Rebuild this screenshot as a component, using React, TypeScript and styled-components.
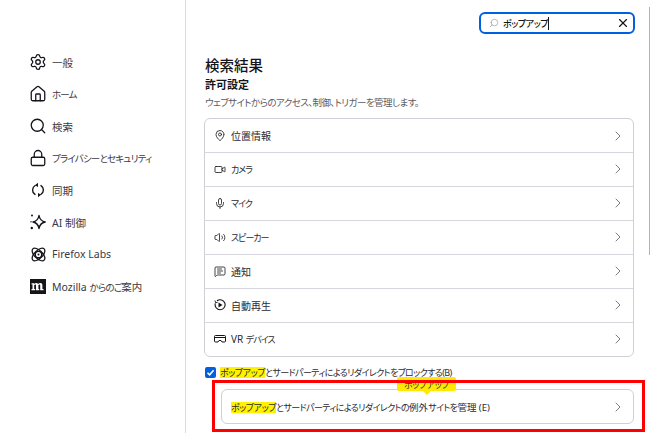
import React from 'react';
import styled, { createGlobalStyle } from 'styled-components';
import {
  Settings,
  House,
  Search,
  Lock,
  MapPin,
  Video,
  Mic,
  Volume2,
  MessageSquareText,
  ChevronRight,
  X,
} from 'lucide-react';

const GlobalStyle = createGlobalStyle`
  html, body {
    margin: 0;
    padding: 0;
    background: #fff;
    overflow: hidden;
  }
  body {
    font-family: "Noto Sans", "Noto Sans CJK JP", sans-serif;
    font-feature-settings: "palt";
    color: #2b2a33;
  }
`;

const Page = styled.div`
  position: relative;
  display: flex;
  width: 650px;
  height: 433px;
  overflow: hidden;
`;

const Sidebar = styled.nav`
  width: 186px;
  height: 100%;
  box-sizing: border-box;
  padding: 46px 0 0 29px;
  border-right: 1px solid #dcdce0;
  display: flex;
  flex-direction: column;
  flex-shrink: 0;
`;

// the kana in the reference's UI font are much narrower than Noto's
const Kana = styled.span`
  font-size: 9px;
  letter-spacing: -0.6px;
`;

const NavItem = styled.div`
  height: 32px;
  display: flex;
  align-items: center;
  gap: 5px;
  font-size: 10.5px;
  color: #3a3944;
  white-space: pre;
  ${Kana} {
    font-size: 9.5px;
    letter-spacing: -0.8px;
  }
`;

const NavIcon = styled.span`
  width: 18px;
  height: 18px;
  display: flex;
  align-items: center;
  justify-content: center;
  color: #15141a;
  flex-shrink: 0;
`;

const Main = styled.main`
  width: 430px;
  margin-left: 18px;
  display: flex;
  flex-direction: column;
`;

const SearchRow = styled.div`
  display: flex;
  justify-content: flex-end;
  margin-right: -1px;
  padding-top: 12px;
`;

const SearchBox = styled.div`
  width: 156px;
  height: 22px;
  box-sizing: border-box;
  border: 2px solid #0060df;
  border-radius: 6px;
  display: flex;
  align-items: center;
  padding: 0 3px 0 8px;
  font-size: 9px;
  font-weight: 500;
  letter-spacing: -0.45px;
  color: #15141a;
`;

const SearchGlass = styled.span`
  display: flex;
  color: #8f8f9d;
  margin-right: 4px;
  transform: scaleX(-1);
`;

const Caret = styled.span`
  width: 1px;
  height: 13px;
  background: #15141a;
`;

const Spacer = styled.span`
  flex: 1;
`;

const Heading = styled.h1`
  margin: 20px 0 0 1px;
  font-size: 14.5px;
  line-height: 22px;
  font-weight: 500;
  color: #15141a;
`;

const SubHeading = styled.h2`
  margin: 0 0 0 1px;
  font-size: 11px;
  line-height: 17px;
  font-weight: 700;
  color: #15141a;
`;

const Description = styled.p`
  margin: 1px 0 0 1px;
  font-size: 9.5px;
  letter-spacing: -0.55px;
  line-height: 17px;
  color: #5b5b66;
`;

const Card = styled.div`
  margin-top: 7px;
  border: 1px solid #cfcfd8;
  border-radius: 6px;
  display: flex;
  flex-direction: column;
`;

const Row = styled.div`
  height: 33px;
  box-sizing: border-box;
  display: flex;
  align-items: center;
  padding: 0 7px 0 9px;
  font-size: 10px;
  color: #2b2a33;
  white-space: pre;
  & + & {
    height: 34px;
    padding-bottom: 1px;
    border-top: 1px solid #d7d7dd;
  }
  ${Kana} {
    letter-spacing: -1px;
  }
`;

const RowIcon = styled.span`
  width: 12px;
  height: 12px;
  margin-right: 5px;
  display: flex;
  align-items: center;
  justify-content: center;
  color: #15141a;
`;

const Chevron = styled.span`
  margin-left: auto;
  display: flex;
  color: #5b5b66;
`;

const CheckRow = styled.label`
  margin-top: 8px;
  padding-left: 1px;
  height: 14px;
  display: flex;
  align-items: center;
  font-size: 10px;
  color: #2b2a33;
  white-space: pre;
`;

const CheckBox = styled.span`
  width: 11px;
  height: 11px;
  margin-right: 4px;
  border-radius: 2px;
  background: #0060df;
  display: flex;
  align-items: center;
  justify-content: center;
`;

const Highlight = styled.mark`
  display: inline-block;
  background: #fff200;
  color: inherit;
  font-size: 9px;
  letter-spacing: -0.45px;
  line-height: 11px;
`;

const ManageButton = styled.div`
  position: relative;
  margin: 10px 0 0 17px;
  height: 35px;
  box-sizing: border-box;
  border: 1px solid #cfcfd8;
  border-radius: 6px;
  display: flex;
  align-items: center;
  padding: 0 7px 0 9px;
  font-size: 9.5px;
  color: #2b2a33;
  white-space: pre;
`;

const Tooltip = styled.span`
  position: absolute;
  left: 175px;
  top: -13px;
  height: 14px;
  padding: 0 7px;
  border-radius: 2px;
  background: #ffe900;
  font-size: 9px;
  letter-spacing: -0.45px;
  line-height: 15px;
  color: #3a3944;
`;

const TooltipTip = styled.span`
  position: absolute;
  left: 201px;
  top: 1px;
  width: 0;
  height: 0;
  border-left: 4px solid transparent;
  border-right: 4px solid transparent;
  border-top: 4px solid #ffe900;
`;

const RedFrame = styled.div`
  position: absolute;
  left: 212px;
  top: 380px;
  width: 433px;
  height: 52px;
  box-sizing: border-box;
  border: 3px solid #ff0000;
  pointer-events: none;
`;

const ScrollThumb = styled.div`
  position: absolute;
  right: 0;
  top: 7px;
  width: 1px;
  height: 248px;
  background: #b4b4b8;
`;

const SparkIcon = () => (
  <svg width="16" height="16" viewBox="0 0 16 16" fill="none" stroke="currentColor" strokeWidth="1.4" strokeLinejoin="round">
    <path d="M9 1.500c.7 4 2.300 5.800 6.200 6.500-3.900.7-5.500 2.500-6.200 6.500C8.300 10.500 6.700 8.700 3 8c3.700-.7 5.300-2.500 6-6.500z" />
    <circle cx="2" cy="1.500" r="1" fill="currentColor" stroke="none" />
    <circle cx="1.800" cy="14" r="1.200" fill="currentColor" stroke="none" />
    <circle cx="1" cy="7.700" r=".7" fill="currentColor" stroke="none" />
  </svg>
);

const SyncIcon = () => (
  <svg width="16" height="16" viewBox="0 0 16 16" fill="none" stroke="currentColor" strokeWidth="1.4" strokeLinecap="round">
    <path d="M5.200 3.500A5.200 5.200 0 0 0 5 12.400" />
    <path d="M10.800 12.500A5.200 5.200 0 0 0 11 3.600" />
    <path d="M8 .8 5 3.300l3 1.700z" fill="currentColor" stroke="none" />
    <path d="M8 15.200l3-2.500-3-1.700z" fill="currentColor" stroke="none" />
  </svg>
);

const LabsIcon = () => (
  <svg width="17" height="17" viewBox="0 0 17 17" fill="none" stroke="currentColor" strokeWidth="1.3">
    <ellipse cx="8.500" cy="8.500" rx="8" ry="4" transform="rotate(45 8.500 8.500)" />
    <ellipse cx="8.500" cy="8.500" rx="8" ry="4" transform="rotate(-45 8.500 8.500)" />
    <circle cx="8.500" cy="8.500" r="3.200" />
    <circle cx="8.500" cy="8.500" r="1" fill="currentColor" stroke="none" />
  </svg>
);

const MozillaIcon = () => (
  <svg width="16" height="15" viewBox="0 0 16 15">
    <rect width="16" height="15" fill="#15141a" />
    <path d="M1.500 4.200h2.700v.9c.5-.7 1.200-1 2-1 .9 0 1.500.3 1.900 1 .5-.7 1.300-1 2.200-1 1.300 0 2.100.8 2.100 2.100v3.700h1.100v1.300h-3.300V6.700c0-.8-.3-1.100-.7-1.100-.5 0-.9.200-1.100.7v3.600h.8v1.300H6V6.700c0-.8-.2-1.100-.7-1.100-.5 0-.9.200-1.100.7v3.600h1v1.300H1.500V9.900h1V5.500h-1z" fill="#fff" />
  </svg>
);

const AutoplayIcon = () => (
  <svg width="12" height="12" viewBox="0 0 12 12" fill="none" stroke="currentColor" strokeWidth="1.100">
    <path d="M3 1.800A5 5 0 1 1 1.300 4.300" />
    <path d="M1 1.500l.6 2.300 2.100-.6" strokeWidth=".9" />
    <path d="M4.500 3.500 8.500 6l-4 2.500z" fill="currentColor" stroke="none" />
  </svg>
);

const VrIcon = () => (
  <svg width="12" height="12" viewBox="0 0 12 12" fill="none" stroke="currentColor" strokeWidth="1" strokeLinejoin="round">
    <path d="M1.500 2.500h9a1 1 0 0 1 1 1v4.500a1 1 0 0 1-1 1H8L7 7.500H5L4 9H1.500a1 1 0 0 1-1-1V3.500a1 1 0 0 1 1-1z" />
    <path d="M.5 4.500h11" />
  </svg>
);

const navItems = [
  { id: 'general', label: '一般', icon: <Settings size={18} strokeWidth={1.7} /> },
  { id: 'home', label: <Kana>ホーム</Kana>, icon: <House size={18} strokeWidth={1.7} /> },
  { id: 'search', label: '検索', icon: <Search size={18} strokeWidth={1.7} /> },
  { id: 'privacy', label: <Kana>プライバシーとセキュリティ</Kana>, icon: <Lock size={18} strokeWidth={1.7} /> },
  { id: 'sync', label: '同期', icon: <SyncIcon /> },
  { id: 'ai', label: 'AI 制御', icon: <SparkIcon /> },
  { id: 'labs', label: 'Firefox Labs', icon: <LabsIcon /> },
  { id: 'mozilla', label: <>Mozilla <Kana>からのご</Kana>案内</>, icon: <MozillaIcon /> },
];

const permissionRows = [
  { id: 'location', label: '位置情報', icon: <MapPin size={13} strokeWidth={1.6} /> },
  { id: 'camera', label: <Kana>カメラ</Kana>, icon: <Video size={13} strokeWidth={1.6} /> },
  { id: 'mic', label: <Kana>マイク</Kana>, icon: <Mic size={13} strokeWidth={1.6} /> },
  { id: 'speaker', label: <Kana>スピーカー</Kana>, icon: <Volume2 size={13} strokeWidth={1.6} /> },
  { id: 'notify', label: '通知', icon: <MessageSquareText size={13} strokeWidth={1.6} /> },
  { id: 'autoplay', label: '自動再生', icon: <AutoplayIcon /> },
  { id: 'vr', label: <>VR <Kana>デバイス</Kana></>, icon: <VrIcon /> },
];

const App: React.FC = () => (
  <Page>
    <GlobalStyle />
    <Sidebar>
      {navItems.map((item) => (
        <NavItem key={item.id}>
          <NavIcon>{item.icon}</NavIcon>
          <span>{item.label}</span>
        </NavItem>
      ))}
    </Sidebar>
    <Main>
      <SearchRow>
        <SearchBox>
          <SearchGlass>
            <Search size={10} strokeWidth={1.5} />
          </SearchGlass>
          ポップアップ
          <Caret />
          <Spacer />
          <X size={14} strokeWidth={2} color="#15141a" />
        </SearchBox>
      </SearchRow>
      <Heading>検索結果</Heading>
      <SubHeading>許可設定</SubHeading>
      <Description>ウェブサイトからのアクセス、制御、トリガーを管理します。</Description>
      <Card>
        {permissionRows.map((row) => (
          <Row key={row.id}>
            <RowIcon>{row.icon}</RowIcon>
            <span>{row.label}</span>
            <Chevron>
              <ChevronRight size={16} strokeWidth={1.2} />
            </Chevron>
          </Row>
        ))}
      </Card>
      <CheckRow>
        <CheckBox>
          <svg width="9" height="9" viewBox="0 0 9 9" fill="none" stroke="#fff" strokeWidth="1.6">
            <path d="M1.500 4.700 3.600 6.800 7.600 2.200" />
          </svg>
        </CheckBox>
        <span>
          <Highlight>ポップアップ</Highlight>
          <Kana>とサードパーティによるリダイレクトをブロックする(B)</Kana>
        </span>
      </CheckRow>
      <ManageButton>
        <Tooltip>ポップアップ</Tooltip>
        <TooltipTip />
        <span>
          <Highlight>ポップアップ</Highlight>
          <Kana>とサードパーティによるリダイレクトの</Kana>例外<Kana>サイトを</Kana>管理 (E)
        </span>
        <Chevron>
          <ChevronRight size={16} strokeWidth={1.2} />
        </Chevron>
      </ManageButton>
    </Main>
    <RedFrame />
    <ScrollThumb />
  </Page>
);

export default App;
